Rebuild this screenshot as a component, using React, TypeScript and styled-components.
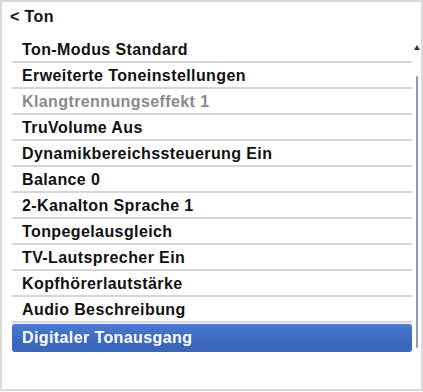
import React from "react";
import styled, { createGlobalStyle } from "styled-components";

const Global = createGlobalStyle`
  html, body { margin: 0; padding: 0; background: #ffffff; }
  * { box-sizing: border-box; }
`;

const Frame = styled.div`
  width: 423px;
  height: 391px;
  border: 2px solid #dadada;
  background: #ffffff;
  font-family: "Liberation Sans", Arial, sans-serif;
  font-weight: bold;
  display: flex;
  flex-direction: column;
`;

const Header = styled.div`
  height: 35px;
  padding: 0 0 5px 8px;
  display: flex;
  align-items: center;
  font-size: 16px;
  letter-spacing: 0.4px;
  color: #111;
`;

const Body = styled.div`
  display: flex;
  flex: 1;
  padding-left: 10px;
`;

const List = styled.div`
  width: 400px;
  display: flex;
  flex-direction: column;
`;

const Row = styled.div<{ $dim?: boolean; $selected?: boolean }>`
  height: ${(p) => (p.$selected ? "28px" : "26px")};
  margin-top: ${(p) => (p.$selected ? "1px" : "0")};
  padding-left: 10px;
  display: flex;
  align-items: center;
  font-size: 16px;
  letter-spacing: 0.4px;
  color: ${(p) => (p.$selected ? "#ffffff" : p.$dim ? "#8a8a8a" : "#111111")};
  border-bottom: ${(p) => (p.$selected ? "none" : "2px solid #d6d6d6")};
  border-radius: ${(p) => (p.$selected ? "3px" : "0")};
  background: ${(p) =>
    p.$selected ? "linear-gradient(#4a7bd0, #3b68bd 60%, #3a66b8)" : "transparent"};
  padding-top: ${(p) => (p.$selected ? "0" : "1px")};
`;

const Scroll = styled.div`
  width: 9px;
  display: flex;
  flex-direction: column;
  align-items: center;
  padding-left: 1px;
`;

const Arrow = styled.div`
  margin-top: 8px;
  width: 0;
  height: 0;
  border-left: 3px solid transparent;
  border-right: 3px solid transparent;
  border-bottom: 5px solid #333;
`;

const Track = styled.div`
  margin-top: 26px;
  width: 2px;
  height: 272px;
  background: #8d9cc0;
  border-radius: 1px;
`;

const items: { label: string; dim?: boolean; selected?: boolean }[] = [
  { label: "Ton-Modus Standard" },
  { label: "Erweiterte Toneinstellungen" },
  { label: "Klangtrennungseffekt 1", dim: true },
  { label: "TruVolume Aus" },
  { label: "Dynamikbereichssteuerung Ein" },
  { label: "Balance 0" },
  { label: "2-Kanalton Sprache 1" },
  { label: "Tonpegelausgleich" },
  { label: "TV-Lautsprecher Ein" },
  { label: "Kopfhörerlautstärke" },
  { label: "Audio Beschreibung" },
  { label: "Digitaler Tonausgang", selected: true },
];

export default function App() {
  return (
    <>
      <Global />
      <Frame>
        <Header>&lt; Ton</Header>
        <Body>
          <List>
            {items.map((it) => (
              <Row key={it.label} $dim={it.dim} $selected={it.selected}>
                {it.label}
              </Row>
            ))}
          </List>
          <Scroll>
            <Arrow />
            <Track />
          </Scroll>
        </Body>
      </Frame>
    </>
  );
}
